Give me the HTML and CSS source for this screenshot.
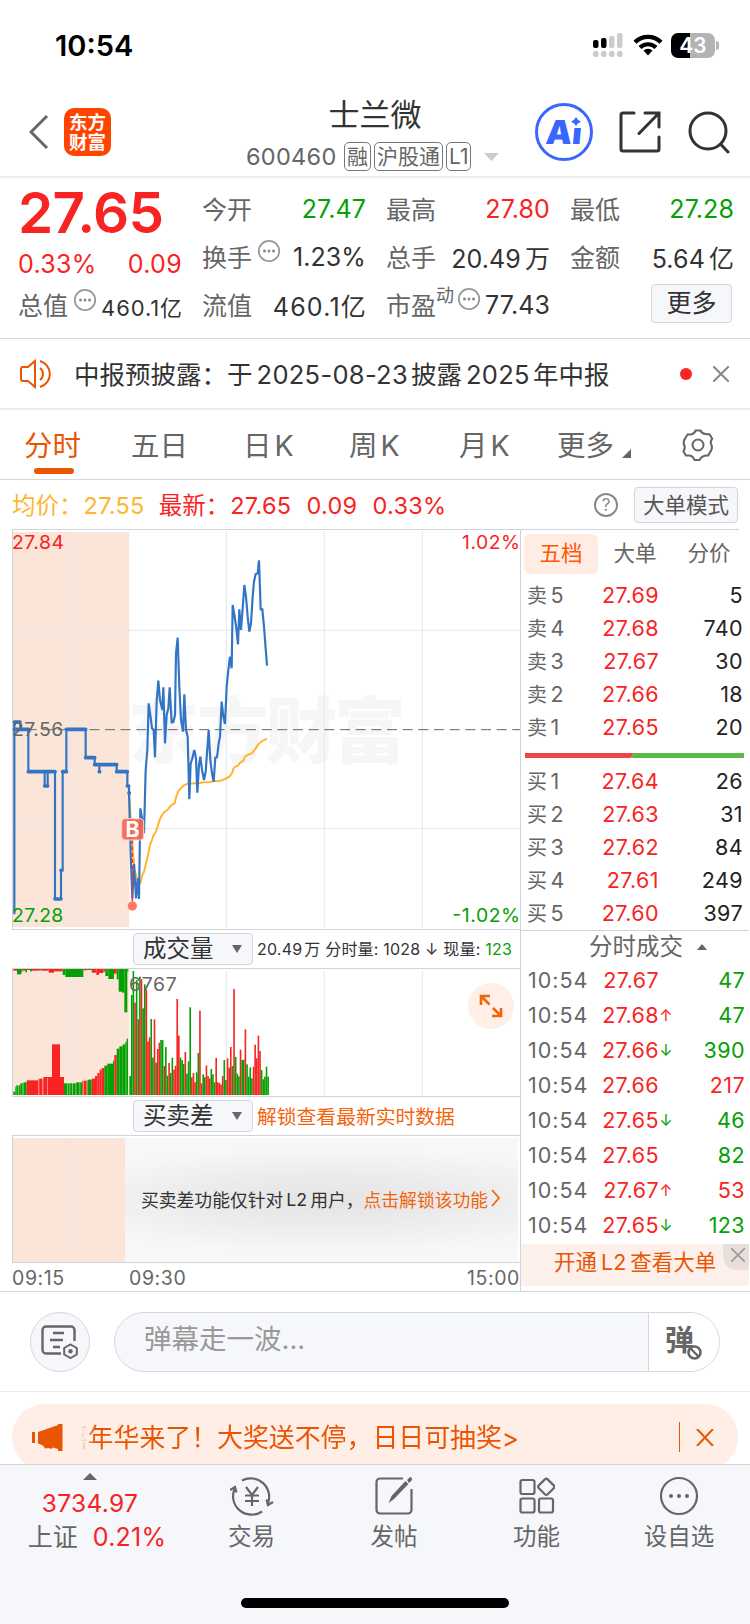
FILE: index.html
```html
<!DOCTYPE html>
<html lang="zh-CN">
<head>
    <meta charset="UTF-8">
    <title>士兰微 600460</title>
    <link rel="stylesheet" href="styles.css">
</head>
<body>
<div class="page">

    <div class="status">
        <span class="clock">10:54</span>
        <svg class="signal" width="30" height="24" viewBox="0 0 30 24">
            <g fill="#000"><rect x="0" y="7" width="5.500" height="8" rx="2"/><rect x="8" y="5" width="5.500" height="10" rx="2"/></g>
            <g fill="#ccc"><rect x="16" y="3" width="5.500" height="12" rx="2"/><rect x="24" y="0" width="5.500" height="15" rx="2"/>
            <rect x="0" y="18" width="5.500" height="6" rx="2"/><rect x="8" y="18" width="5.500" height="6" rx="2"/><rect x="16" y="18" width="5.500" height="6" rx="2"/><rect x="24" y="18" width="5.500" height="6" rx="2"/></g>
        </svg>
        <svg class="wifi" width="30" height="22" viewBox="0 0 30 22">
            <g fill="none" stroke="#000" stroke-width="4.200"><path d="M2 8.200a18.500 18.500 0 0 1 26 0"/><path d="M7 13.500a11.500 11.500 0 0 1 16 0"/></g>
            <path d="M15 21.500l-4.500-5a6.500 6.500 0 0 1 9 0z"/>
        </svg>
        <div class="battery"><b>43</b></div>
    </div>

    <div class="header">
        <svg class="back" width="20" height="36" viewBox="0 0 20 36"><path d="M18 2L2 18l16 16" fill="none" stroke="#666" stroke-width="3"/></svg>
        <div class="logo">东方<br>财富</div>
        <div class="title">
            <h1>士兰微</h1>
            <div class="code"><span class="num">600460</span><i>融</i><i>沪股通</i><i>L1</i>
                <svg width="15" height="8" viewBox="0 0 15 8"><path d="M0 0h15l-7.500 8z" fill="#ccc"/></svg></div>
        </div>
        <div class="ai"><span>Ai</span>
            <svg width="14" height="11" viewBox="0 0 14 11"><path d="M0 0h14v11H0z" fill="#fff"/><path d="M7 0q1.500 3.500 5 4.500-3.500 1.500-5 5-1.500-3.500-5-5 3.500-1 5-4.500z" fill="#3866ff"/></svg>
        </div>
        <svg class="share" width="42" height="42" viewBox="0 0 42 42"><g fill="none" stroke="#333" stroke-width="3" stroke-linecap="round"><path d="M15 2H4a2 2 0 0 0-2 2v34a2 2 0 0 0 2 2h34a2 2 0 0 0 2-2V26"/><path d="M26 2h14v14M39.500 2.500L20 22.500"/></g></svg>
        <svg class="search" width="42" height="44" viewBox="0 0 42 44"><g fill="none" stroke="#333" stroke-width="3"><circle cx="20" cy="20" r="18"/><path d="M32.500 33l7.500 8" stroke-linecap="round"/></g></svg>
    </div>

    <div class="quote">
        <div class="quote-main">
            <div class="price">27.65</div>
            <div class="pair red"><span>0.33%</span><span>0.09</span></div>
            <div class="pair cap"><label>总值</label><svg class="dots" viewBox="0 0 24 24"><use href="#dots"/></svg><span>460.1亿</span></div>
        </div>
        <div class="cell"><label>今开</label><span class="green">27.47</span></div>
        <div class="cell"><label>最高</label><span class="red">27.80</span></div>
        <div class="cell"><label>最低</label><span class="green">27.28</span></div>
        <div class="cell"><label>换手</label><svg class="dots" viewBox="0 0 24 24"><use href="#dots"/></svg><span>1.23%</span></div>
        <div class="cell"><label>总手</label><span>20.49<em>万</em></span></div>
        <div class="cell"><label>金额</label><span>5.64<em>亿</em></span></div>
        <div class="cell"><label>流值</label><span class="float">460.1亿</span></div>
        <div class="cell"><label>市盈</label><sup>动</sup><svg class="dots pe" viewBox="0 0 24 24"><use href="#dots"/></svg><span>77.43</span></div>
        <div class="cell"><button class="more">更多</button></div>
    </div>

    <div class="notice">
        <svg width="34" height="30" viewBox="0 0 34 30"><g fill="none" stroke="#ea5504" stroke-width="2"><path d="M15 2v26l-7-6H3a2 2 0 0 1-2-2V10a2 2 0 0 1 2-2h5z"/><path d="M20 9a7.500 7.500 0 0 1 0 12M20 2a13.500 13.500 0 0 1 0 26"/></g></svg>
        <span class="notice-text">中报预披露：<em>于</em><b>2025-08-23</b><em>披露</em><b>2025</b><em>年中报</em></span>
        <i class="dot"></i>
        <svg class="close" width="16" height="16" viewBox="0 0 16 16"><path d="M0 0l16 16M16 0L0 16" stroke="#888" stroke-width="2"/></svg>
    </div>

    <div class="tabs">
        <span class="on">分时</span><span>五日</span><span>日<b>K</b></span><span>周<b>K</b></span><span>月<b>K</b></span><span>更多<i></i></span>
        <svg width="34" height="34" viewBox="0 0 34 34"><g fill="none" stroke="#666" stroke-width="2"><path d="M14.500 2.500h5q1.500 3.500 5 3.500l4.200.4 2.500 4.300q-2.500 3.200-.8 6.300 1.500 3.200-.8 6.300l-2.500 4.300q-6-.4-8.600 4.400h-5q-1.500-3.900-5-4.400h-3.600l-2.500-4.300q2.300-3.100.8-6.300-1.500-3.100.8-6.300l2.500-4.300h3.600q3.500-.5 4.400-3.900z"/><circle cx="17" cy="17" r="5.500"/></g></svg>
    </div>

    <div class="info">
        <span class="avg">均价：<b>27.55</b></span>
        <span class="last">最新：<b>27.65</b><b>0.09</b><b>0.33%</b></span>
        <i>?</i>
        <button>大单模式</button>
    </div>

    <div class="board">
        <div class="charts">
            <!-- 3 svg units = 1px -->
            <svg class="trend" width="509" height="401" viewBox="36 27 1527 1203">
                <rect x="38" y="36" width="350" height="1185" fill="#fbe5d9"/>
                <text class="mark" x="385" y="712" textLength="832">东方财富</text>
                <g class="grid"><path d="M211 33v1188M679 33v1188M973 33v1188M1267 33v1188M38 331h1522M38 925h1522"/></g>
                <path d="M38 629h1522" stroke="#666" stroke-width="3" stroke-dasharray="30 17" stroke-dashoffset="5"/>
                <path class="frame" d="M37.500 1228V28.500h1525V1228.500H36"/>
                <polyline class="avg-line" points="387,800 392,900 398,990 404,1050 411,1075 421,1088 427,1065 433,1053 439,1025 444,1005 450,975 456,960 461,945 468,935 474,915 480,897 486,885 494,875 502,870 510,860 518,853 524,850 528,832 534,815 542,805 552,796 562,791 600,789 612,787 630,786 645,783 662,782 675,777 688,770 697,758 700,746 706,740 714,737 720,729 730,722 735,710 745,704 755,700 765,688 775,673 785,664 795,659 801,657"/>
                <path class="call-line" d="M43 1183V606H60L62 628H85V755H134V798H143V755H165V1137H183V1051H188V755H199V628H257V713H284V734H298V755 734H350V755H382V798H387V819"/>
                <path class="call-dots" d="M43 606H60M43 628H85M85 755H165M134 798H143M165 1137H183M183 1051h1M188 755h11M199 628H257M257 713H284M284 734H350M298 755h1M350 755H382M382 798h4M387 819h1"/>
                <polyline class="price-line" points="387,819 392,1000 397,1135 402,1032 408,1135 413,1075 417,1137 421,865 427,900 432,940 437,750 442,690 446,550 451,585 456,625 461,630 465,712 470,545 475,482 480,540 487,570 490,502 495,670 500,585 505,565 509,502 515,607 520,606 525,585 528,400 533,353 538,500 543,600 549,635 553,523 558,630 563,650 568,838 572,730 577,715 583,690 588,715 592,818 597,735 601,710 606,750 612,780 617,755 626,630 631,720 636,760 641,785 646,713 651,712 656,670 660,650 665,545 670,590 675,612 680,500 685,450 690,410 695,445 698,255 704,290 709,325 714,373 718,268 723,330 728,265 733,195 738,230 743,290 748,335 753,310 758,230 762,185 767,162 773,160 777,121 782,268 787,268 792,320 797,385 801,437"/>
                <path d="M397 960v190" stroke="#f5372c" stroke-width="5" stroke-dasharray="12 7"/>
                <circle cx="397" cy="1158" r="14" fill="#ff7a69"/>
                <rect x="365" y="896" width="66" height="64" rx="10" fill="#f9604f" fill-opacity=".9" stroke="#ffd5cd" stroke-width="3"/>
                <text class="buy" x="398" y="950">B</text>
                <text class="ax" x="36" y="87" fill="#f82323" textLength="156">27.84</text>
                <text class="ax" x="36" y="648" fill="#666" textLength="154">27.56</text>
                <text class="ax" x="36" y="1207" fill="#04a004" textLength="154">27.28</text>
                <text class="ax" x="1386" y="87" fill="#f82323" textLength="174">1.02%</text>
                <text class="ax" x="1357" y="1207" fill="#04a004" textLength="203">-1.02%</text>
            </svg>
            <div class="strip">
                <button>成交量<i></i></button>
                <span class="vol">20.49<em>万</em> 分时量: 1028 ↓ 现量: <b>123</b></span>
            </div>
            <div class="volume">
                <svg width="509" height="128" viewBox="36 147 1527 384">
                    <rect x="38" y="147" width="350" height="378" fill="#fbe5d9"/>
                    <g class="grid"><path d="M211 147v378M679 153v372M973 153v372M1267 153v372"/></g>
                    <g id="callBars"></g>
                    <g id="bars"></g>
                    <path class="frame" d="M37.500 147V529.500H1563"/>
                    <text class="ax" x="387" y="213" fill="#666" textLength="143">6767</text>
                </svg>
                <div class="expand"><svg width="24" height="24" viewBox="0 0 24 24"><g fill="none" stroke="#f2640c" stroke-width="2.600"><path d="M11 2H2v9M2.500 2.500l8 8M22 14v8h-9M21.500 21.500L14 14"/></g></svg></div>
            </div>
            <div class="strip">
                <button>买卖差<i></i></button>
                <span class="unlock">解锁查看最新实时数据</span>
            </div>
            <div class="diff">
                <div class="diff-call"></div>
                <div class="diff-lock">买卖差功能仅针对<b>L2</b>用户，<a>点击解锁该功能</a><svg width="9" height="18" viewBox="0 0 9 18"><path d="M1 1l7 8-7 8" fill="none" stroke="#f2640c" stroke-width="1.800"/></svg></div>
            </div>
            <div class="times"><span>09:15</span><span>09:30</span><span>15:00</span></div>
        </div>

        <div class="side">
            <div class="side-tabs"><span class="on">五档</span><span>大单</span><span>分价</span></div>
            <div class="levels">
                <p><span>卖<b>5</b></span><span>27.69</span><span>5</span></p>
                <p><span>卖<b>4</b></span><span>27.68</span><span>740</span></p>
                <p><span>卖<b>3</b></span><span>27.67</span><span>30</span></p>
                <p><span>卖<b>2</b></span><span>27.66</span><span>18</span></p>
                <p><span>卖<b>1</b></span><span>27.65</span><span>20</span></p>
            </div>
            <svg class="ratio" width="219" height="5" viewBox="0 0 219 5"><path d="M0 0h109.500l-4.500 5H0z" fill="#ee4545"/><path d="M109.500 0H219v5H105z" fill="#5bb947"/></svg>
            <div class="levels">
                <p><span>买<b>1</b></span><span>27.64</span><span>26</span></p>
                <p><span>买<b>2</b></span><span>27.63</span><span>31</span></p>
                <p><span>买<b>3</b></span><span>27.62</span><span>84</span></p>
                <p><span>买<b>4</b></span><span>27.61</span><span>249</span></p>
                <p><span>买<b>5</b></span><span>27.60</span><span>397</span></p>
            </div>
            <div class="deals-title">分时成交<i></i></div>
            <div class="deals">
                <p><span>10:54</span><span>27.67</span><i></i><b class="green">47</b></p>
                <p><span>10:54</span><span>27.68</span><i class="up"></i><b class="green">47</b></p>
                <p><span>10:54</span><span>27.66</span><i class="down"></i><b class="green">390</b></p>
                <p><span>10:54</span><span>27.66</span><i></i><b class="red">217</b></p>
                <p><span>10:54</span><span>27.65</span><i class="down"></i><b class="green">46</b></p>
                <p><span>10:54</span><span>27.65</span><i></i><b class="green">82</b></p>
                <p><span>10:54</span><span>27.67</span><i class="up"></i><b class="red">53</b></p>
                <p><span>10:54</span><span>27.65</span><i class="down"></i><b class="green">123</b></p>
            </div>
            <div class="l2">开通<b>L2</b>查看大单
                <div class="l2-close"><svg width="14" height="14" viewBox="0 0 14 14"><path d="M0 0l14 14M14 0L0 14" stroke="#999" stroke-width="1.600"/></svg></div>
            </div>
        </div>
    </div>

    <div class="comment">
        <div class="round"><svg width="38" height="34" viewBox="0 0 38 34"><g fill="none" stroke="#666" stroke-width="2.400"><path d="M20 28.500H5a3.500 3.500 0 0 1-3.500-3.500V5A3.500 3.500 0 0 1 5 1.500h25A3.500 3.500 0 0 1 33.500 5v11"/><path d="M12 8h11M9 15h13M12 22h7"/><path d="M29.500 19.500l6.300 3.500v6.500L29.500 33l-6.300-3.500V23z" stroke-width="2"/></g><circle cx="29.500" cy="26.300" r="2.200" fill="#666"/></svg></div>
        <div class="input">
            <span>弹幕走一波...</span>
            <div class="danmu">弹<svg width="15" height="15" viewBox="0 0 15 15"><circle cx="7.500" cy="7.500" r="6" fill="#fff" stroke="#666" stroke-width="2.600"/><path d="M3.500 3.500l8 8" stroke="#666" stroke-width="2.400"/></svg></div>
        </div>
    </div>

    <div class="promo-wrap">
        <div class="promo">
            <svg width="31" height="27" viewBox="0 0 31 27"><path d="M0 8h3v11H0zM6 8L26 1V0h4.500v27H26v-2l-5-1.500-2 1.500-2-1-4 .5-2-3-5-2z" fill="#ea5504"/></svg>
            <span class="promo-text">嘉年华来了！大奖送不停，日日可抽奖&gt;</span>
            <i></i>
            <svg class="promo-x" width="18" height="17" viewBox="0 0 18 17"><path d="M1 0l16 17M17 0L1 17" stroke="#ea5504" stroke-width="2"/></svg>
        </div>
    </div>

    <div class="nav">
        <div class="index">
            <i></i>
            <b>3734.97</b>
            <p>上证<b>0.21%</b></p>
        </div>
        <div class="item">
            <svg width="44" height="40" viewBox="0 0 44 40"><g fill="none" stroke="#666" stroke-width="2.200"><path d="M12 4.500a18.500 18.500 0 0 1 25.500 24M32 35.500A18.500 18.500 0 0 1 5 12"/><path d="M0 14l5-3 1.500 5.500M43 26l-5 3-1.500-5.500M16 11l6 8 6-8M15 19.500h14M15 25h14M22 19v11"/></g></svg>
            <span>交易</span>
        </div>
        <div class="item">
            <svg width="40" height="40" viewBox="0 0 40 40"><path d="M29 2.500H6A3.500 3.500 0 0 0 2.500 6v28A3.500 3.500 0 0 0 6 37.500h28a3.500 3.500 0 0 0 3.500-3.500V13" fill="none" stroke="#666" stroke-width="2.200"/><path d="M14.500 27l3-7L31.500 5l3 3L20 23zM33 4l3-3q2.500.5 2 3L35 7z" fill="#666"/></svg>
            <span>发帖</span>
        </div>
        <div class="item">
            <svg width="36" height="40" viewBox="0 0 36 40"><g fill="none" stroke="#666" stroke-width="2.200"><rect x="1.500" y="4" width="14" height="14" rx="2"/><rect x="1.500" y="22.500" width="14" height="14" rx="2"/><rect x="20" y="22.500" width="14" height="14" rx="2"/><rect x="21" y="4.500" width="12.500" height="12.500" rx="2" transform="rotate(45 27.200 10.800)"/></g></svg>
            <span>功能</span>
        </div>
        <div class="item">
            <svg width="40" height="40" viewBox="0 0 40 40"><circle cx="20" cy="20" r="18" fill="none" stroke="#666" stroke-width="2.200"/><g fill="#666"><circle cx="12" cy="20" r="2"/><circle cx="20" cy="20" r="2"/><circle cx="28" cy="20" r="2"/></g></svg>
            <span>设自选</span>
        </div>
    </div>
    <div class="home"><i></i></div>
</div>

<svg width="0" height="0">
    <symbol id="dots" viewBox="0 0 24 24"><circle cx="12" cy="12" r="10.200" fill="none" stroke="#999" stroke-width="1.800"/><circle cx="7.500" cy="12" r="1.500" fill="#888"/><circle cx="12" cy="12" r="1.500" fill="#888"/><circle cx="16.500" cy="12" r="1.500" fill="#888"/></symbol>
</svg>
<script src="chart.js"></script>
</body>
</html>
```
FILE: styles.css
```css
* {
    box-sizing: border-box;
}
body {
    margin: 0;
    font-family: Inter, "Noto Sans CJK SC", sans-serif;
    color: #333;
}
h1, p {
    margin: 0;
    font-weight: 400;
}
i, em {
    font-style: normal;
}
b {
    font-weight: 400;
}
svg {
    flex: none;
    display: block;
}
button {
    font-family: inherit;
    color: #333;
    background: #f6f7fa;
    border: 1px solid #d2d6dc;
    border-radius: 4px;
    padding: 0;
}
.page {
    width: 750px;
    height: 1624px;
    overflow: hidden;
    background: #fff;
    display: flex;
    flex-direction: column;
    white-space: nowrap;
}
.page > div {
    flex: none;
}
.red { color: #f82323; }
.green { color: #04a004; }

/* status bar */
.status {
    height: 90px;
    padding: 0 31px 0 55px;
    display: flex;
    align-items: center;
    color: #000;
}
.clock {
    font-size: 29px;
    font-weight: 600;
    margin-right: auto;
}
.signal { margin-right: 10px; }
.wifi { margin-right: 8px; }
.battery {
    width: 44px;
    height: 25px;
    margin-right: 4px;
    border-radius: 7px;
    background: linear-gradient(90deg, #000 43%, #b3b3b3 43%);
    color: #fff;
    font-size: 21px;
    line-height: 25px;
    text-align: center;
    position: relative;
}
.battery b { font-weight: 600; }
.battery::after {
    content: "";
    position: absolute;
    right: -4px;
    top: 8px;
    width: 3px;
    height: 9px;
    border-radius: 0 3px 3px 0;
    background: #b3b3b3;
}

/* header */
.header {
    height: 88px;
    padding: 0 20px 0 29px;
    border-bottom: 2px solid #ededed;
    display: flex;
    align-items: center;
}
.back { margin-top: -2px; }
.logo {
    width: 47px;
    height: 48px;
    margin: -3px 0 0 15px;
    border-radius: 10px;
    background: #ff4400;
    color: #fff;
    font-size: 18.500px;
    font-weight: 700;
    line-height: 20px;
    padding-top: 4px;
    text-align: center;
}
.title {
    width: 254px;
    margin-left: 135px;
}
.title h1 {
    width: 258px;
    font-size: 31px;
    line-height: 40px;
    text-align: center;
    margin: 2px 0 5px;
}
.code {
    display: flex;
    align-items: center;
    height: 34px;
    color: #666;
    font-size: 21px;
}
.code .num {
    font-size: 23.500px;
    letter-spacing: .3px;
    width: 98px;
}
.code i {
    height: 29px;
    line-height: 27px;
    padding: 0 2px;
    border: 1px solid #777;
    border-radius: 5px;
    margin-right: 3px;
}
.code svg { margin-left: 10px; }
.ai {
    width: 58px;
    height: 58px;
    margin: -2px 0 0 35px;
    border: 3px solid #3866ff;
    border-radius: 50%;
    color: #3866ff;
    font-size: 33px;
    font-weight: 900;
    line-height: 52px;
    text-align: center;
    position: relative;
}
.ai span {
    display: block;
    transform: skewX(-5deg);
}
.ai svg {
    position: absolute;
    right: 7px;
    top: 11px;
}
.share { margin: -2px 0 0 26px; }
.search { margin: 0 0 0 27px; }

/* quote */
.quote {
    height: 161px;
    padding: 6px 0 0 18px;
    border-bottom: 1px solid #d5d8dc;
    display: grid;
    grid-template-columns: repeat(4, 164px);
    grid-template-rows: repeat(3, 48px);
    column-gap: 20px;
    font-size: 25px;
}
.quote-main {
    grid-row: span 3;
}
.price {
    height: 56px;
    line-height: 57px;
    font-size: 56.500px;
    font-weight: 600;
    color: #f82323;
    letter-spacing: -.7px;
}
.pair {
    height: 48px;
    display: flex;
    align-items: center;
    justify-content: space-between;
    letter-spacing: .3px;
}
.cap {
    height: 32px;
}
.cap span {
    font-size: 22px;
    letter-spacing: .9px;
    margin-right: -1px;
    padding-top: 3px;
}
label, .cell sup { color: #666; }
label { letter-spacing: 0; }
.cell {
    display: flex;
    align-items: center;
    position: relative;
}
.cell > span {
    margin: 1px 0 0 auto;
    letter-spacing: .1px;
}
.cell > .float {
    letter-spacing: 1.200px;
    margin-right: -1px;
}
.cell em { margin-left: 4px; }
.dots {
    width: 24px;
    height: 24px;
    margin: -10px 0 0 5px;
}
.cap .dots { margin: -8px 0 0 0; }
.cell sup {
    font-size: 18px;
    line-height: 18px;
    margin-top: -16px;
    vertical-align: baseline;
}
.dots.pe { margin-left: 3px; }
.more {
    width: 81px;
    height: 39px;
    margin: -1px 2px 0 auto;
    font-size: 25px;
    line-height: 35px;
}

/* notice */
.notice {
    height: 71px;
    padding: 0 21px 0 20px;
    border-bottom: 2px solid #ececec;
    display: flex;
    align-items: center;
    font-size: 25.500px;
}
.notice-text {
    margin-left: 20px;
    padding-bottom: 3px;
}
.notice-text b {
    margin: 0 3px 0 4px;
    letter-spacing: .3px;
}
.dot {
    width: 12px;
    height: 12px;
    border-radius: 50%;
    background: #f82323;
    margin-left: auto;
}
.close { margin-left: 21px; }

/* period tabs */
.tabs {
    height: 70px;
    padding-left: 24px;
    border-bottom: 1px solid #d5d8dc;
    display: grid;
    grid-template-columns: 107px 112px 106px 110px 98px 124px 34px;
    align-items: center;
    font-size: 28.500px;
    color: #666;
}
.tabs span {
    position: relative;
    padding-bottom: 3px;
}
.tabs b { margin-left: 3px; }
.tabs .on { color: #ea5504; }
.tabs .on::after {
    content: "";
    position: absolute;
    left: 10px;
    bottom: -7px;
    width: 40px;
    height: 6px;
    border-radius: 3px;
    background: #ea5504;
}
.tabs i {
    display: inline-block;
    margin: 0 0 -2px 8px;
    border-left: 9px solid transparent;
    border-bottom: 9px solid #666;
}

/* average / last line */
.info {
    height: 49px;
    padding: 0 12px;
    display: flex;
    align-items: center;
    font-size: 23.500px;
}
.info span { padding-bottom: 2px; }
.info b { letter-spacing: .3px; }
.avg { color: #ffb52e; }
.avg b { margin-left: 1px; }
.last {
    color: #f82323;
    margin-left: 14px;
}
.last b:first-child { margin-left: 1px; }
.last b + b { margin-left: 15px; }
.info i {
    width: 24px;
    height: 24px;
    margin-left: auto;
    border: 2px solid #888;
    border-radius: 50%;
    font-size: 17px;
    line-height: 20px;
    text-align: center;
    color: #888;
}
.info button {
    width: 104px;
    height: 36px;
    margin-left: 16px;
    font-size: 21.500px;
    line-height: 32px;
    color: #555;
}

/* charts */
.board {
    height: 763px;
    padding-left: 12px;
    border-bottom: 1px solid #d0d3d8;
    display: flex;
}
.charts { width: 509px; }
.grid path {
    fill: none;
    stroke: #e3e7f0;
    stroke-width: 3;
}
.frame {
    fill: none;
    stroke: #d0d3d8;
    stroke-width: 3;
}
.mark {
    font-size: 214px;
    font-weight: 900;
    fill: #f6f6f6;
}
.ax { font-size: 58px; }
.avg-line {
    fill: none;
    stroke: #ffb52e;
    stroke-width: 6;
}
.price-line, .call-line {
    fill: none;
    stroke: #3275c4;
    stroke-width: 6.500;
}
.call-dots {
    fill: none;
    stroke: #3275c4;
    stroke-width: 11;
    stroke-linecap: round;
}
.buy {
    font-size: 64px;
    font-weight: 700;
    fill: #fff;
    text-anchor: middle;
}
.strip {
    height: 39px;
    border-right: 1px solid #d0d3d8;
    border-bottom: 1px solid #d0d3d8;
    padding-left: 121px;
    display: flex;
    align-items: center;
}
.strip button {
    width: 120px;
    height: 32px;
    padding-left: 9px;
    display: flex;
    align-items: center;
    font-size: 23.500px;
    line-height: 28px;
}
.strip button i {
    margin-left: 18px;
    border: 5px solid transparent;
    border-top: 8px solid #666;
    border-bottom: 0;
}
.strip span { margin-left: 4px; }
.vol {
    font-size: 16px;
    letter-spacing: .2px;
    padding-bottom: 2px;
}
.vol em { margin-left: 2px; }
.vol b { color: #04a004; }
.unlock {
    font-size: 19.800px;
    color: #f2640c;
    padding-bottom: 2px;
}
.volume {
    position: relative;
    height: 128px;
}
.expand {
    position: absolute;
    left: 456px;
    top: 14px;
    width: 46px;
    height: 46px;
    border-radius: 50%;
    background: #ffefe6;
    display: flex;
    align-items: center;
    justify-content: center;
}
.diff {
    height: 127px;
    padding: 2px 3px 0 0;
    border-left: 1px solid #d0d3d8;
    border-bottom: 1px solid #d0d3d8;
    display: flex;
}
.diff-call {
    width: 112px;
    background: linear-gradient(90deg, transparent 57px, #e3e7f0 57px, #e3e7f0 58px, transparent 58px) #fbe5d9;
}
.diff-lock {
    flex: 1;
    padding: 0 0 2px 16px;
    display: flex;
    align-items: center;
    font-size: 17.800px;
    background: radial-gradient(ellipse 75% 42% at 52% 50%, #e4e4e4 0, #ebebeb 45%, #f7f7f7 100%);
}
.diff-lock b { margin: 0 3px; }
.diff-lock a { color: #f2640c; }
.diff-lock svg { margin: -3px 0 0 3px; }
.times {
    height: 28px;
    display: grid;
    grid-template-columns: 117px 1fr auto;
    align-items: center;
    font-size: 19.500px;
    letter-spacing: .6px;
    color: #666;
    padding: 2px 1px 0 0;
}

/* order book */
.side {
    width: 229px;
    border-left: 1px solid #d0d3d8;
    margin-left: -1px;
}
.side-tabs {
    width: 218px;
    height: 50px;
    padding: 4px 0 0 3px;
    border-top: 1px solid #d0d3d8;
    display: grid;
    grid-template-columns: repeat(3, 74px);
    text-align: center;
    font-size: 21.500px;
    line-height: 39px;
    color: #666;
}
.side-tabs span { height: 40px; }
.side-tabs .on {
    background: #ffece2;
    border-radius: 6px;
    color: #ff5500;
}
.levels p, .deals p {
    height: 33px;
    line-height: 33px;
    display: grid;
    grid-template-columns: 60px 72px 84px;
    padding-left: 6px;
    font-size: 21.500px;
    letter-spacing: .4px;
}
.levels span:first-child {
    color: #666;
    font-size: 20px;
}
.levels b {
    font-size: 21.500px;
    margin-left: 3px;
}
.levels span:nth-child(2) {
    color: #f82323;
    text-align: right;
}
.levels span:nth-child(3) {
    text-align: right;
    color: #222;
}
.ratio {
    margin: 9px 0 7px 4px;
}
.deals-title {
    height: 33px;
    border-top: 1px solid #d0d3d8;
    padding-left: 68px;
    display: flex;
    align-items: center;
    font-size: 23.500px;
    line-height: 32px;
    color: #666;
}
.deals-title i {
    margin-left: 14px;
    border: 5px solid transparent;
    border-bottom: 6px solid #666;
    border-top: 0;
}
.deals p {
    height: 35px;
    line-height: 34px;
    grid-template-columns: 60px 71px 14px 72px;
    padding-left: 7px;
}
.deals span:first-child {
    color: #666;
    letter-spacing: 1px;
}
.deals span:nth-child(2) {
    color: #f82323;
    text-align: right;
}
.deals i {
    font-size: 16px;
    text-align: right;
}
.deals .up::after { content: "↑"; color: #f82323; }
.deals .down::after { content: "↓"; color: #04a004; }
.deals b { text-align: right; }
.l2 {
    height: 42px;
    margin-top: 1px;
    padding-left: 33px;
    background: #fdf0ea;
    color: #ea5504;
    font-size: 21.500px;
    line-height: 37px;
    position: relative;
}
.l2 b { margin: 0 4px; }
.l2-close {
    position: absolute;
    right: 0;
    top: 0;
    width: 26px;
    height: 26px;
    border-bottom-left-radius: 14px;
    background: #e9dfda;
    display: flex;
    align-items: center;
    justify-content: center;
    padding: 0 0 4px 4px;
}

/* comment box */
.comment {
    height: 100px;
    padding: 0 30px;
    border-bottom: 1px solid #ebebeb;
    display: flex;
    align-items: center;
}
.round {
    width: 60px;
    height: 60px;
    border: 1px solid #d5d8dc;
    border-radius: 50%;
    background: #f6f7fa;
    display: flex;
    align-items: center;
    justify-content: center;
}
.input {
    width: 606px;
    height: 60px;
    margin-left: 24px;
    border: 1px solid #d5d8dc;
    border-radius: 30px;
    background: #f6f7fa;
    overflow: hidden;
    display: flex;
}
.input span {
    flex: 1;
    padding-left: 29px;
    font-size: 27.500px;
    line-height: 53px;
    color: #999;
}
.danmu {
    width: 71px;
    border-left: 1px solid #d5d8dc;
    background: #fff;
    padding-left: 16px;
    font-size: 29px;
    font-weight: 700;
    line-height: 56px;
    color: #666;
    position: relative;
}
.danmu svg {
    position: absolute;
    left: 38px;
    top: 32px;
}

/* promo */
.promo-wrap {
    height: 72px;
    padding: 12px 12px 0;
    overflow: hidden;
}
.promo {
    height: 66px;
    border-radius: 33px;
    background: #feeee5;
    padding: 0 24px 0 20px;
    display: flex;
    align-items: center;
    color: #ea5504;
}
.promo-text {
    width: 438px;
    margin-left: 18px;
    padding-bottom: 4px;
    font-size: 25.900px;
    overflow: hidden;
    display: flex;
    justify-content: flex-end;
    -webkit-mask-image: linear-gradient(90deg, transparent, #000 14px);
    mask-image: linear-gradient(90deg, transparent, #000 14px);
}
.promo i {
    width: 1px;
    height: 30px;
    background: #ea5504;
    margin-left: auto;
}
.promo-x { margin-left: 16px; }

/* bottom bar */
.nav {
    height: 110px;
    padding-top: 8px;
    border-top: 1px solid #d0d5da;
    background: #f6f7fa;
    display: grid;
    grid-template-columns: 180px 143px 142px 143px 142px;
    font-size: 24px;
    color: #666;
}
.index {
    display: flex;
    flex-direction: column;
    align-items: center;
}
.index > i {
    border: 7px solid transparent;
    border-bottom: 7px solid #666;
    border-top: 0;
}
.index b { color: #f82323; }
.index > b {
    font-size: 24.500px;
    line-height: 34px;
    letter-spacing: .3px;
    margin-top: 6px;
}
.index p {
    font-size: 25px;
    line-height: 35px;
    padding-left: 14px;
}
.index p b {
    margin-left: 15px;
    letter-spacing: .2px;
}
.item {
    display: flex;
    flex-direction: column;
    align-items: center;
    padding-top: 3px;
}
.item span {
    font-size: 23.500px;
    line-height: 34px;
    margin-top: 4px;
}
.home {
    height: 50px;
    padding: 24px 241px 0;
    background: #f6f7fa;
}
.home i {
    display: block;
    height: 10px;
    border-radius: 5px;
    background: #000;
}
```
FILE: chart.js
```js
const RED = "#f82323";
const GREEN = "#04a004";
const BASE = 525;

// minute bars: top of the bar, negative = green
const minutes = [
    -468, -225, -153, 248, -180, 298, -170, 178, -265, -193, 210, 365, 352, -297, -413, 298, -428, 387, 368, -360,
    -360, 438, -381, -467, 429, -459, -413, 449, 437, 237, 347, -413, -420, -432, 396, -461, -424, -262, 472, 459,
    487, -457, -399, 272, 490, -463, -472, 436, 468, 475, -447, -463, -487, 414, 487, 489, 494, 468, -420, -480,
    415, 443, 381, -438, 207, -411, -461, -469, 389, -420, -419, 328, -433, -470, -442, -475, 440, 374, 415, 347,
    393, -450, -478, -470, -440, -470
];

// opening auction, [x, top, colour] steps
const auction = [
    [40, 515, GREEN], [46, 500, GREEN], [49, 496, GREEN], [61, 490, GREEN], [70, 487, GREEN], [80, 481, RED],
    [115, 476, RED], [130, 471, RED], [156, 373, RED], [180, 471, RED], [192, 490, GREEN], [228, 487, GREEN],
    [247, 482, RED], [262, 479, GREEN], [275, 476, RED], [285, 468, RED], [292, 459, RED], [299, 449, RED],
    [305, 444, RED], [313, 437, GREEN], [322, 431, GREEN], [339, 422, GREEN], [343, 405, RED], [350, 386, GREEN],
    [358, 379, GREEN], [368, 373, GREEN], [376, 365, GREEN], [380, 356, GREEN], [384]
];
const unmatched = [
    [40, 152, RED], [51, 163, GREEN], [64, 157, GREEN], [67, 152, RED], [76, 157, GREEN], [81, 150, RED],
    [90, 154, GREEN], [96, 152, RED], [117, 151, GREEN], [124, 152, RED], [146, 158, RED], [162, 154, RED],
    [188, 165, GREEN], [196, 171, GREEN], [250, 151, RED], [262, 150, GREEN], [275, 158, RED], [289, 165, RED],
    [297, 159, RED], [310, 155, RED], [316, 168, GREEN], [325, 177, GREEN], [342, 161, RED], [350, 178, GREEN],
    [356, 215, GREEN], [366, 218, GREEN], [373, 277, GREEN], [382, 155, GREEN], [385]
];
const gaps = [54, 68, 116, 127, 142, 201, 209, 217, 227, 239, 249, 260];

function rect(x, y, w, h, fill) {
    return `<rect x="${x}" y="${y}" width="${w}" height="${h}" fill="${fill}"/>`;
}

let html = "";
for (let i = 0; i < auction.length - 1; i++) {
    const [x, top, fill] = auction[i];
    html += rect(x, top, auction[i + 1][0] - x, BASE - top, fill);
}
for (const x of gaps) {
    html += rect(x, 474, 1.5, BASE - 474, "#fbe5d9");
}
for (let i = 0; i < unmatched.length - 1; i++) {
    const [x, bottom, fill] = unmatched[i];
    html += rect(x, 147, unmatched[i + 1][0] - x, bottom - 147, fill);
}
document.getElementById("callBars").innerHTML = html;

document.getElementById("bars").innerHTML = minutes.map((v, i) => {
    const top = Math.abs(v);
    return rect(388 + i * 4.87, top, 4.87, BASE - top, v < 0 ? GREEN : RED);
}).join("");
```
